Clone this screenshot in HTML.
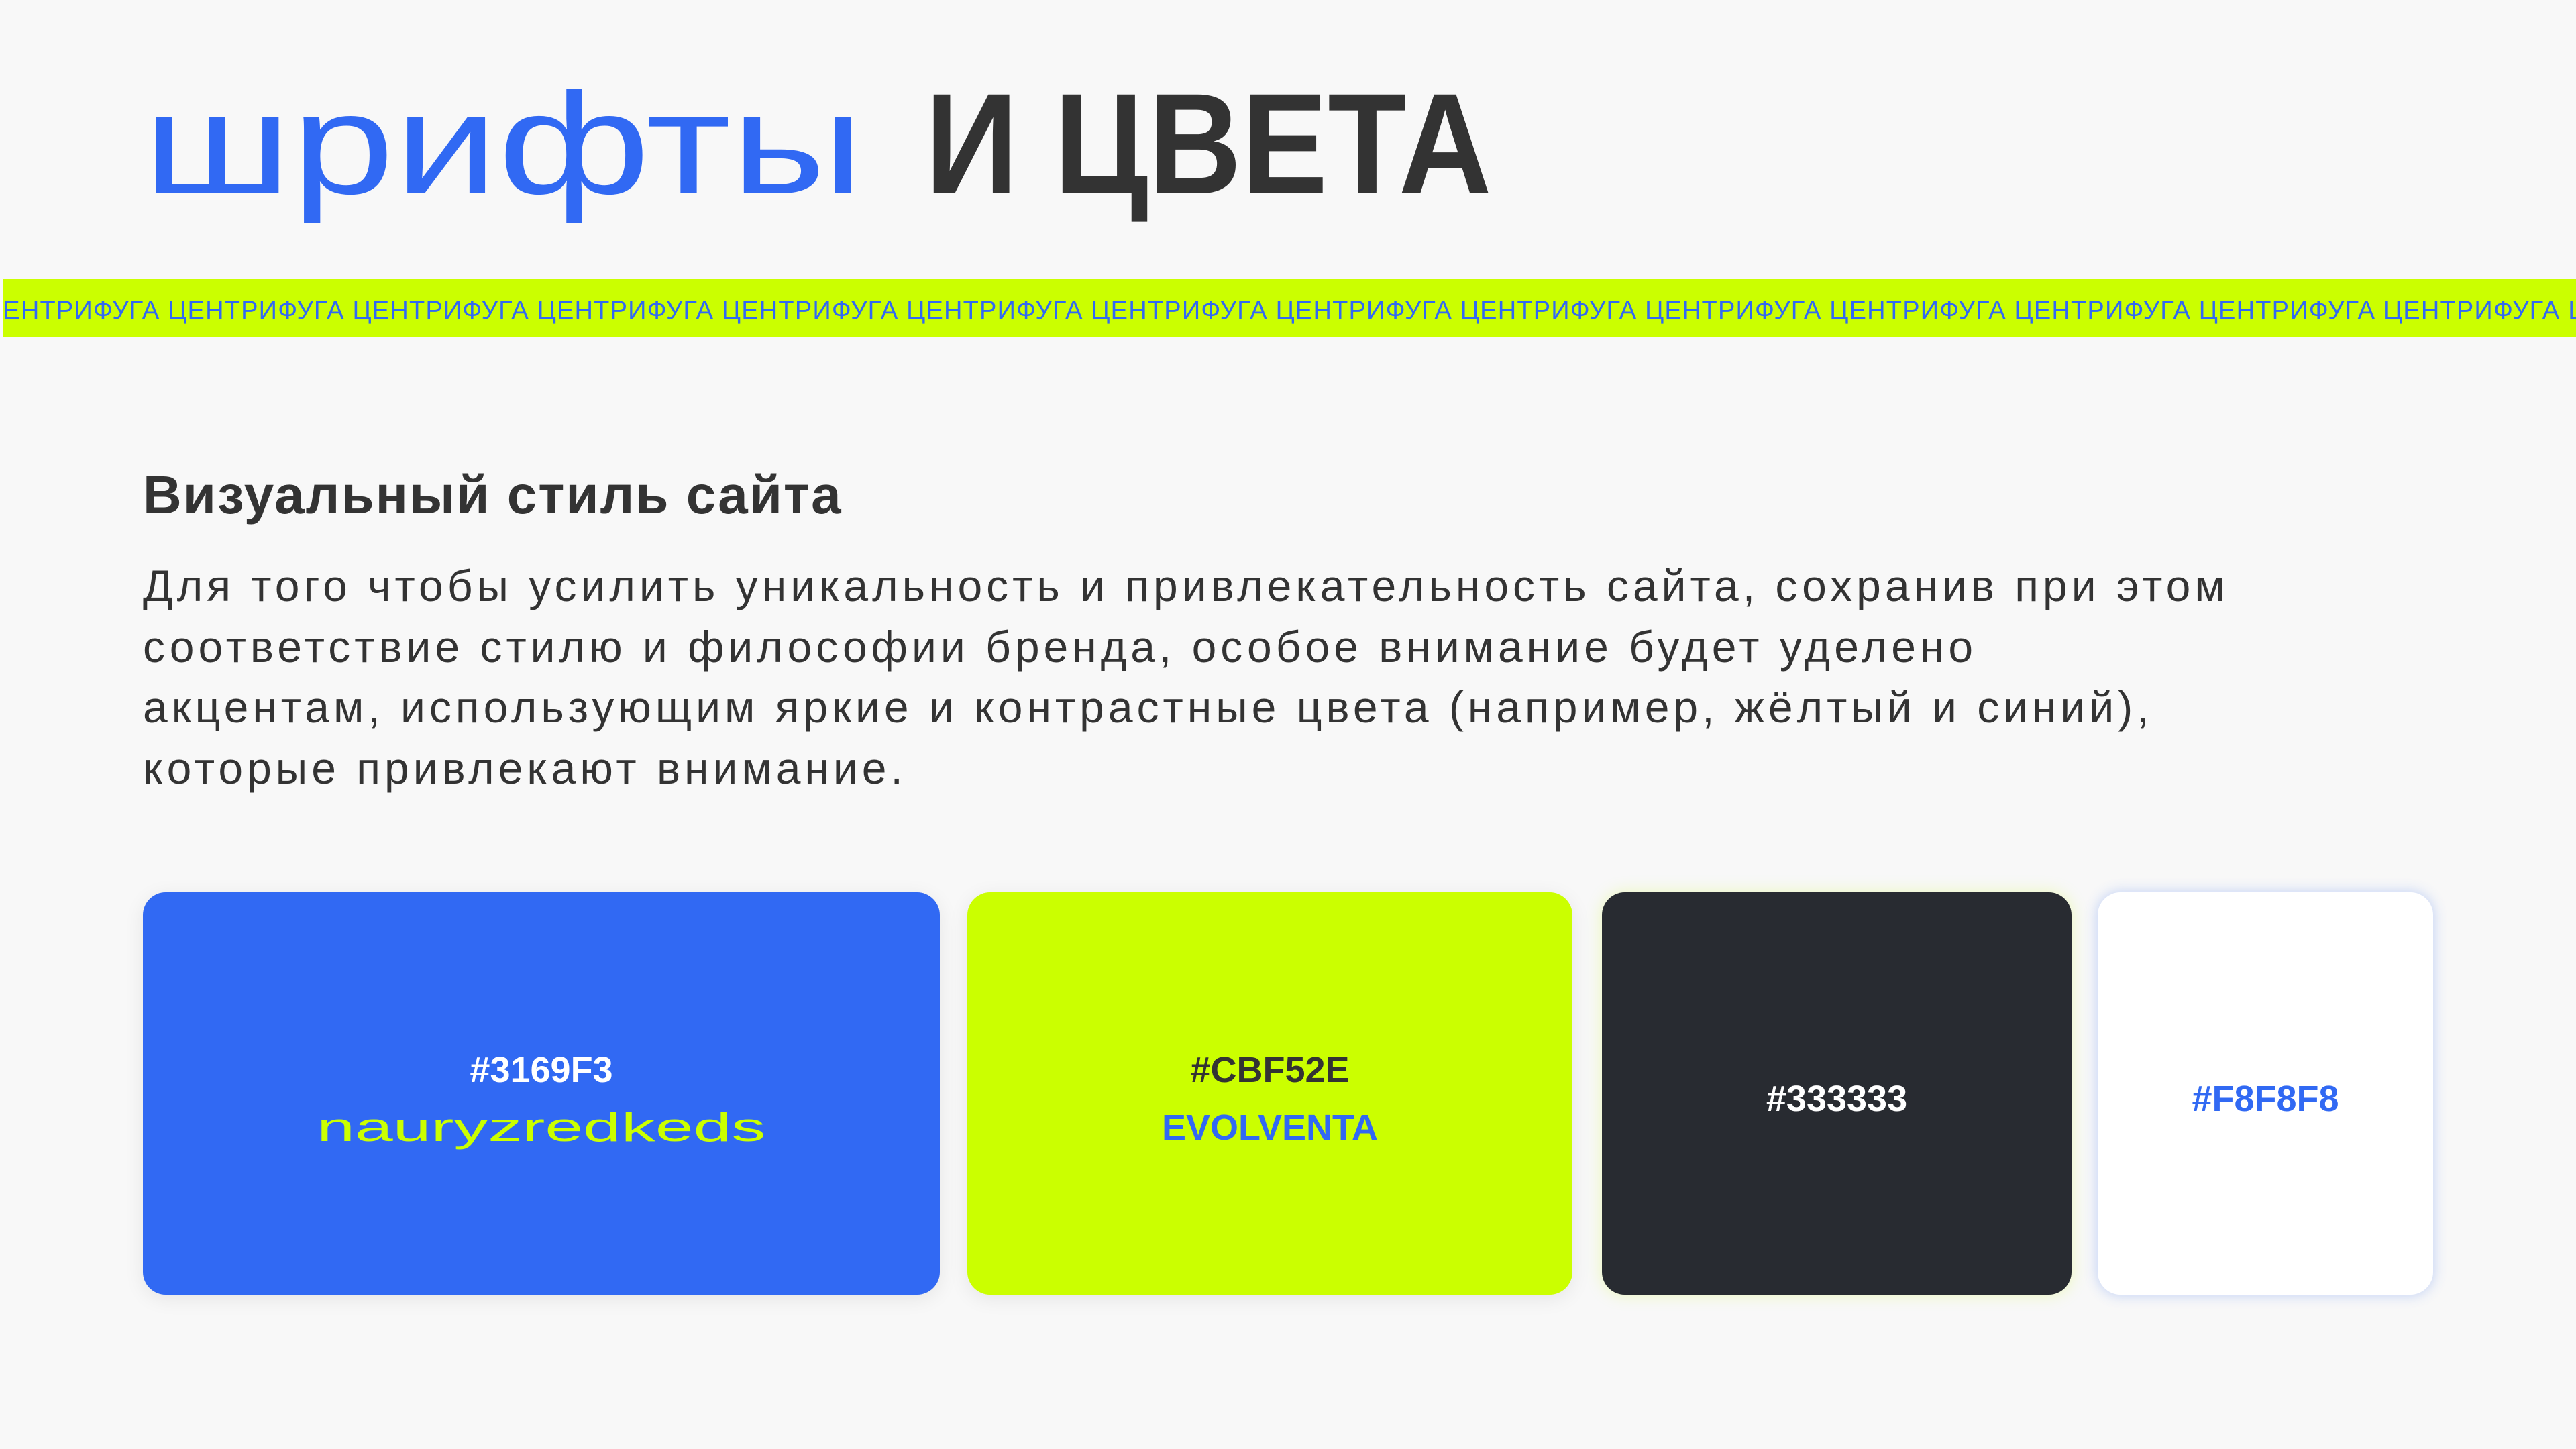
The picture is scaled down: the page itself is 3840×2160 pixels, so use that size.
<!DOCTYPE html>
<html><head><meta charset="utf-8"><style>
*{margin:0;padding:0;box-sizing:border-box}
body{width:3840px;height:2160px;background:#f8f8f8;font-family:"Liberation Sans","DejaVu Sans",sans-serif;color:#333;position:relative;overflow:hidden}
.t{position:absolute;top:108px;font-size:214px;line-height:1;white-space:nowrap;transform-origin:0 0}
.b{left:213px;color:#3169f3;transform:scaleX(1.29)}
.d{left:1379px;font-weight:bold;transform:scaleX(0.9)}
.strip{position:absolute;left:5px;top:416px;width:3835px;height:86px;background:#cbff00;overflow:hidden;white-space:nowrap;color:#3169f3;font-size:38px;line-height:86px;padding-top:4px;letter-spacing:1.2px}
.strip span{display:inline-block;margin-left:-30px}
h2{position:absolute;left:213px;top:692px;font-size:80px;font-weight:bold;letter-spacing:2px}
p{position:absolute;left:213px;top:828px;font-size:66px;line-height:90.5px;width:3500px;letter-spacing:6px;white-space:nowrap}
.c{position:absolute;top:1330px;height:600px;border-radius:34px;display:flex;flex-direction:column;align-items:center;justify-content:center;font-weight:bold;font-size:54px;box-shadow:0 6px 30px rgba(0,0,0,.08);padding-top:16px}
.c div{line-height:86px}
</style></head><body>
<div class="t b">шрифты</div>
<div class="t d">И ЦВЕТА</div>
<div class="strip"><span>ЦЕНТРИФУГА ЦЕНТРИФУГА ЦЕНТРИФУГА ЦЕНТРИФУГА ЦЕНТРИФУГА ЦЕНТРИФУГА ЦЕНТРИФУГА ЦЕНТРИФУГА ЦЕНТРИФУГА ЦЕНТРИФУГА ЦЕНТРИФУГА ЦЕНТРИФУГА ЦЕНТРИФУГА ЦЕНТРИФУГА ЦЕНТРИФУГА ЦЕНТРИФУГА</span></div>
<h2>Визуальный стиль сайта</h2>
<p>Для того чтобы усилить уникальность и привлекательность сайта, сохранив при этом<br>соответствие стилю и философии бренда, особое внимание будет уделено<br>акцентам, использующим яркие и контрастные цвета (например, жёлтый и синий),<br>которые привлекают внимание.</p>
<div class="c" style="left:213px;width:1188px;background:#3169f3;color:#fff"><div>#3169F3</div><div style="color:#cbff00;font-weight:normal;font-size:60px;transform:scaleX(1.7)">nauryzredkeds</div></div>
<div class="c" style="left:1442px;width:902px;background:#cbff00;color:#333"><div>#CBF52E</div><div style="color:#3169f3">EVOLVENTA</div></div>
<div class="c" style="left:2388px;width:700px;background:#282b31;color:#fff;box-shadow:0 0 24px rgba(203,255,0,.25)"><div>#333333</div></div>
<div class="c" style="left:3127px;width:500px;background:#fff;color:#3169f3;box-shadow:0 0 20px rgba(49,105,243,.3)"><div>#F8F8F8</div></div>
</body></html>
